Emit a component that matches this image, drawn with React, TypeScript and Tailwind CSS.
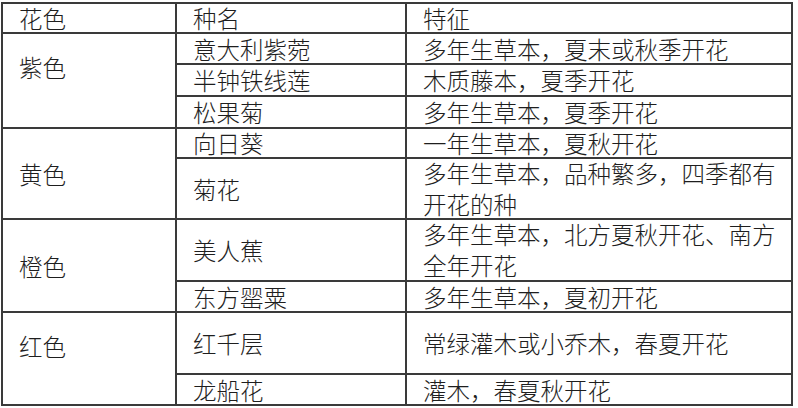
import React from 'react';

// Flower colour table rows: colour group, then species + traits
type Species = { name: string; traits: React.ReactNode; h: string };
type Group = { color: string; pad: string; species: Species[] };

const GROUPS: Group[] = [
  {
    color: '紫色',
    pad: 'pb-[28px]',
    species: [
      { name: '意大利紫菀', traits: '多年生草本，夏末或秋季开花', h: 'h-[31px]' },
      { name: '半钟铁线莲', traits: '木质藤本，夏季开花', h: 'h-[32px]' },
      { name: '松果菊', traits: '多年生草本，夏季开花', h: 'h-[32px]' }
    ]
  },
  {
    color: '黄色',
    pad: '',
    species: [
      { name: '向日葵', traits: '一年生草本，夏秋开花', h: 'h-[30px]' },
      {
        name: '菊花',
        traits: (
          <>
            多年生草本，品种繁多，四季都有
            <br />
            开花的种
          </>
        ),
        h: 'h-[61px]'
      }
    ]
  },
  {
    color: '橙色',
    pad: '',
    species: [
      {
        name: '美人蕉',
        traits: (
          <>
            多年生草本，北方夏秋开花、南方
            <br />
            全年开花
          </>
        ),
        h: 'h-[62px]'
      },
      { name: '东方罂粟', traits: '多年生草本，夏初开花', h: 'h-[31px]' }
    ]
  },
  {
    color: '红色',
    pad: 'pb-[26px]',
    species: [
      { name: '红千层', traits: '常绿灌木或小乔木，春夏开花', h: 'h-[62px]' },
      { name: '龙船花', traits: '灌木，春夏秋开花', h: 'h-[31px]' }
    ]
  }
];

const cell = 'border-2 border-[#3a3a3a] pl-4 pr-1 align-middle whitespace-nowrap leading-[26px]';

export default function App() {
  return (
    <div className="w-[798px] h-[408px] bg-white overflow-hidden">
      <table
        className="ml-[1px] mt-[2px] w-[792px] table-fixed border-collapse text-[23.5px] text-[#1e1e1e] font-light"
        style={{ fontFamily: '"Noto Sans CJK SC", "Noto Sans CJK JP", sans-serif' }}
      >
        <colgroup>
          <col className="w-[174px]" />
          <col className="w-[230px]" />
          <col />
        </colgroup>
        <tbody>
          <tr className="h-[30px]">
            <td className={cell}>花色</td>
            <td className={cell}>种名</td>
            <td className={cell}>特征</td>
          </tr>
          {GROUPS.map(group =>
            group.species.map((sp, i) => (
              <tr key={sp.name} className={sp.h}>
                {i === 0 && (
                  <td rowSpan={group.species.length} className={`${cell} ${group.pad}`}>
                    {group.color}
                  </td>
                )}
                <td className={cell}>{sp.name}</td>
                <td className={cell}>
                  {typeof sp.traits === 'string' ? (
                    sp.traits
                  ) : (
                    <div className="leading-[31px] -my-[2px]">{sp.traits}</div>
                  )}
                </td>
              </tr>
            ))
          )}
        </tbody>
      </table>
    </div>
  );
}
